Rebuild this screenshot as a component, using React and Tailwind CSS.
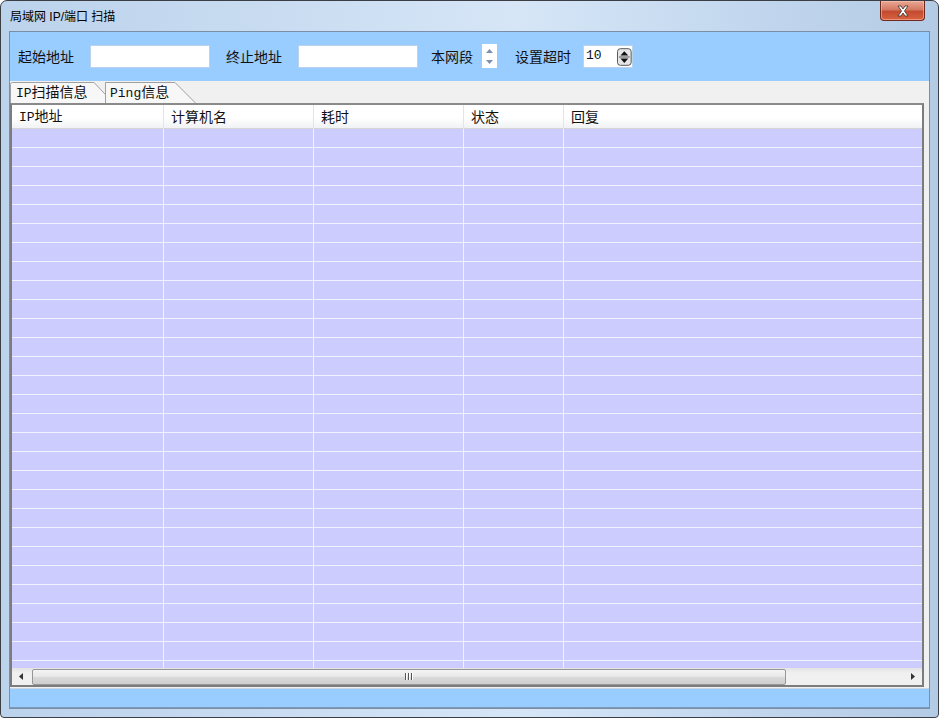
import React from "react";

const CJK = "font-['Noto_Sans_CJK_SC',sans-serif]";
const MONO = "font-['Liberation_Mono','Noto_Sans_CJK_SC',monospace]";

function Lat({ children }) {
  return <span className={`${MONO} text-[13px]`}>{children}</span>;
}

function Spin1() {
  return (
    <div className="w-[15px] h-[24px] bg-white flex flex-col items-center justify-center gap-[7px] mt-[-1px]">
      <svg width="7" height="4" viewBox="0 0 7 4"><path d="M3.5 0 L7 4 L0 4 Z" fill="#7b8fb3" /></svg>
      <svg width="7" height="4" viewBox="0 0 7 4"><path d="M0 0 L7 0 L3.5 4 Z" fill="#7b8fb3" /></svg>
    </div>
  );
}

function Spin2() {
  return (
    <svg width="15" height="18" viewBox="0 0 15 18">
      <rect x="0.5" y="0.5" width="14" height="17" rx="3" fill="#e6e6e6" stroke="#555" />
      <line x1="2" y1="9" x2="13" y2="9" stroke="#555" />
      <path d="M7.5 3 L11.5 7.5 L3.5 7.5 Z" fill="#111" />
      <path d="M3.5 10.5 L11.5 10.5 L7.5 15 Z" fill="#111" />
    </svg>
  );
}

const COLS = ["IP地址", "计算机名", "耗时", "状态", "回复"];

function HeaderLabel({ t }) {
  if (t === "IP地址")
    return (
      <span>
        <Lat>IP</Lat>地址
      </span>
    );
  return <span>{t}</span>;
}

export default function App() {
  const rows = Array.from({ length: 30 });
  return (
    <div className="w-[939px] h-[718px] bg-white">
      <div className="w-[939px] h-[718px] flex flex-col border border-[#3b3f45] rounded-t-[7px] rounded-b-[4px] bg-[linear-gradient(90deg,#bcd3ec_0%,#c9dcf1_30%,#d6e6f7_55%,#c2d7ee_80%,#b4cbe5_100%)] overflow-hidden">
        {/* title bar */}
        <div className="h-[30px] shrink-0 flex items-start relative">
          <div className={`pl-[9px] pt-[8px] text-[12px] text-black font-['Liberation_Sans','Noto_Sans_CJK_SC',sans-serif] leading-[16px]`}>
            局域网 IP/端口 扫描
          </div>
          <div className="absolute right-[13px] top-0 w-[45px] h-[20px] rounded-b-[4px] border border-t-0 border-[#6e2a1e] bg-[linear-gradient(180deg,#e9a895_0%,#d47a63_45%,#c24b30_55%,#d9613f_100%)] flex items-center justify-center shadow-[inset_0_0_0_1px_rgba(255,200,190,0.5)]">
            <svg width="14" height="12" viewBox="0 0 14 12">
              <path d="M2 1 L5 1 L7 4 L9 1 L12 1 L8.5 6 L12 11 L9 11 L7 8 L5 11 L2 11 L5.5 6 Z" fill="#fff" stroke="#4a3a38" strokeWidth="0.9" strokeLinejoin="round" />
            </svg>
          </div>
        </div>

        {/* client */}
        <div className="flex-1 min-h-0 mx-[8px] mb-[8px] flex flex-col border border-[#7a8ea8] bg-[#f0f0f0]">
          {/* toolbar */}
          <div className={`h-[49px] shrink-0 bg-[#99ccff] flex items-center pl-[8px] text-[14px] text-[#111] ${CJK}`}>
            <span className="w-[56px] leading-[16px] mt-[-2px]">起始地址</span>
            <div className="ml-[16px] w-[120px] h-[23px] bg-white border border-[#b9d3ec]" />
            <span className="ml-[16px] w-[56px] leading-[16px] mt-[-2px]">终止地址</span>
            <div className="ml-[16px] w-[120px] h-[23px] bg-white border border-[#b9d3ec]" />
            <span className="ml-[13px] w-[42px] leading-[16px] mt-[-2px]">本网段</span>
            <div className="ml-[9px]"><Spin1 /></div>
            <span className="ml-[18px] w-[56px] leading-[16px] mt-[-2px]">设置超时</span>
            <div className="ml-[12px] w-[50px] h-[23px] bg-white border border-[#b9d3ec] flex items-center pl-[2px]">
              <span className={`${MONO} text-[13px] w-[32px] mt-[-1px]`}>10</span>
              <Spin2 />
            </div>
          </div>

          {/* tab area */}
          <div className="flex-1 min-h-0 flex flex-col pr-[5px] pb-[1px]">
            <div className={`h-[22px] shrink-0 flex items-end text-[14px] text-[#111] ${CJK}`}>
              <div className="relative w-[104px] h-[21px]">
                <svg className="absolute inset-0" width="104" height="21" viewBox="0 0 104 21">
                  <path d="M0.5 21 V2.5 Q0.5 0.5 2.5 0.5 H84 L103.5 21" fill="#f7f7f7" stroke="#a0a0a0" />
                </svg>
                <div className="relative pl-[6px] leading-[20px] mt-[-1px]">
                  <Lat>IP</Lat>扫描信息
                </div>
              </div>
              <div className="relative w-[91px] h-[21px] ml-[-9px]">
                <svg className="absolute inset-0" width="91" height="21" viewBox="0 0 91 21">
                  <path d="M0.5 21 V0.5 H70 L90.5 21" fill="#f7f7f7" stroke="#a0a0a0" />
                </svg>
                <div className="relative pl-[5px] leading-[20px] mt-[-1px]">
                  <Lat>Ping</Lat>信息
                </div>
              </div>
            </div>

            {/* list */}
            <div className="flex-1 min-h-0 flex flex-col border-2 border-[#7c7c7c] border-t-[#8a8a8a] bg-[#ccccff] overflow-hidden">
              <div className={`h-[24px] shrink-0 grid grid-cols-[152px_150px_150px_100px_1fr] bg-[linear-gradient(180deg,#ffffff_0%,#ffffff_55%,#f1f2f4_100%)] border-b border-[#d5d5d5] text-[14px] text-[#111] ${CJK}`}>
                {COLS.map((c, i) => (
                  <div key={i} className={`pl-[7px] pb-[2px] flex items-center ${i < 4 ? "border-r border-[#e4e4e4]" : ""}`}>
                    <HeaderLabel t={c} />
                  </div>
                ))}
              </div>
              <div className="flex-1 min-h-0 overflow-hidden">
                {rows.map((_, r) => (
                  <div key={r} className="h-[19px] grid grid-cols-[152px_150px_150px_100px_1fr] border-b border-[#f2f2ff]">
                    {[0, 1, 2, 3, 4].map((i) => (
                      <div key={i} className={i < 4 ? "border-r border-[#f2f2ff]" : ""} />
                    ))}
                  </div>
                ))}
              </div>
              {/* scrollbar */}
              <div className="h-[17px] shrink-0 bg-[linear-gradient(180deg,#e3e3e3_0%,#f0f0f0_30%,#f0f0f0_100%)] flex items-center">
                <div className="w-[18px] h-[17px] flex items-center justify-center">
                  <svg width="4" height="7" viewBox="0 0 4 7"><path d="M4 0 L0 3.5 L4 7 Z" fill="#333" /></svg>
                </div>
                <div className="ml-[2px] w-[754px] h-[16px] rounded-[2px] border border-[#979797] bg-[linear-gradient(180deg,#f4f4f4_0%,#e9e9e9_45%,#d8d8d8_55%,#cfcfcf_100%)] flex items-center justify-center">
                  <div className="flex gap-[1px]">
                    <div className="w-[2px] h-[7px] bg-[#555] border-r border-[#fff]" />
                    <div className="w-[2px] h-[7px] bg-[#555] border-r border-[#fff]" />
                    <div className="w-[2px] h-[7px] bg-[#555] border-r border-[#fff]" />
                  </div>
                </div>
                <div className="flex-1" />
                <div className="w-[18px] h-[17px] flex items-center justify-center">
                  <svg width="4" height="7" viewBox="0 0 4 7"><path d="M0 0 L4 3.5 L0 7 Z" fill="#333" /></svg>
                </div>
              </div>
            </div>
          </div>

          {/* status bar */}
          <div className="h-[20px] shrink-0 bg-[#99ccff] border-t border-[#c8d6e4] border-b border-b-[#7d9ab8]" />
        </div>
      </div>
    </div>
  );
}
